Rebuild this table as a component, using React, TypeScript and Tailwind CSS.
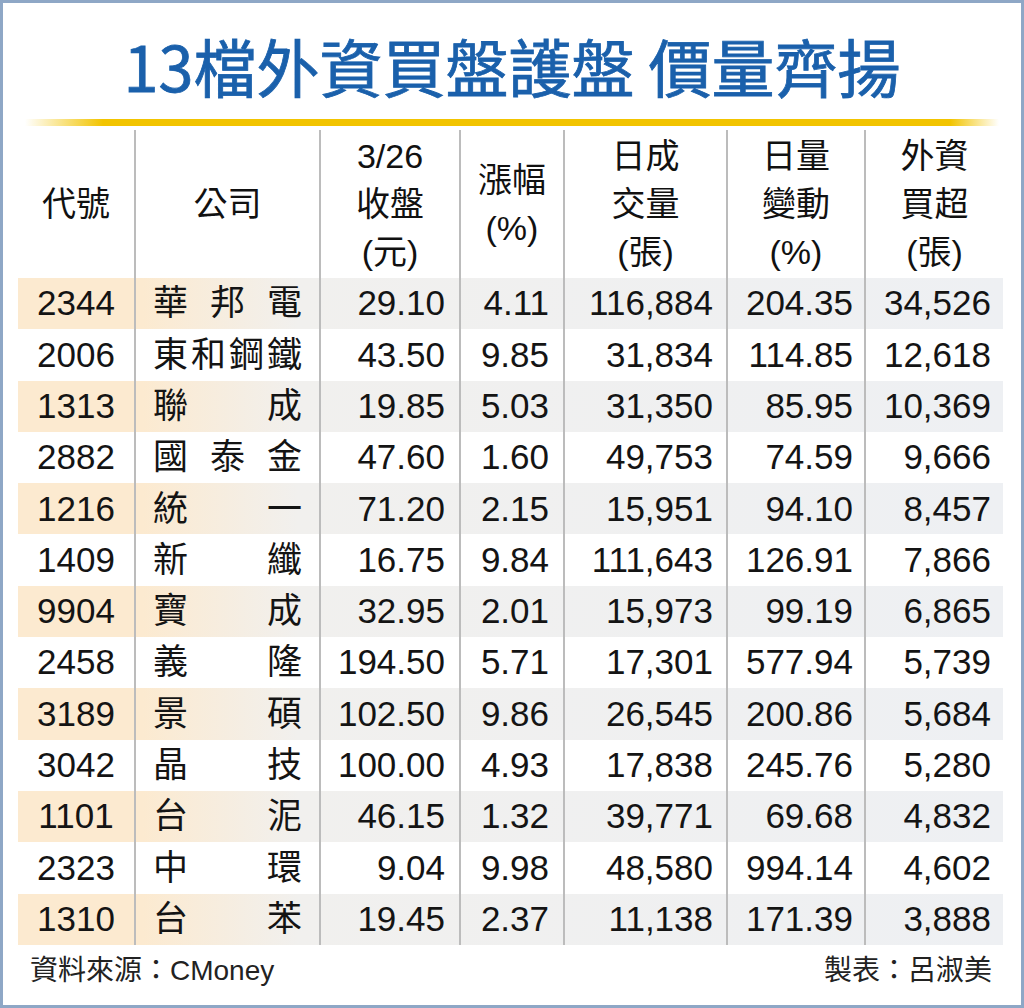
import React from "react";

type Row = [string, string, string, string, string, string, string];

const rows: Row[] = [
  ["2344", "華邦電", "29.10", "4.11", "116,884", "204.35", "34,526"],
  ["2006", "東和鋼鐵", "43.50", "9.85", "31,834", "114.85", "12,618"],
  ["1313", "聯成", "19.85", "5.03", "31,350", "85.95", "10,369"],
  ["2882", "國泰金", "47.60", "1.60", "49,753", "74.59", "9,666"],
  ["1216", "統一", "71.20", "2.15", "15,951", "94.10", "8,457"],
  ["1409", "新纖", "16.75", "9.84", "111,643", "126.91", "7,866"],
  ["9904", "寶成", "32.95", "2.01", "15,973", "99.19", "6,865"],
  ["2458", "義隆", "194.50", "5.71", "17,301", "577.94", "5,739"],
  ["3189", "景碩", "102.50", "9.86", "26,545", "200.86", "5,684"],
  ["3042", "晶技", "100.00", "4.93", "17,838", "245.76", "5,280"],
  ["1101", "台泥", "46.15", "1.32", "39,771", "69.68", "4,832"],
  ["2323", "中環", "9.04", "9.98", "48,580", "994.14", "4,602"],
  ["1310", "台苯", "19.45", "2.37", "11,138", "171.39", "3,888"],
];

const font = "font-['Liberation_Sans','Noto_Sans_CJK_TC','Noto_Sans_CJK_SC',sans-serif]";
const sep = "border-l-2 border-[#bcbcbc]";

function Header({ lines, w, first }: { lines: string[]; w: string; first?: boolean }) {
  return (
    <div className={`${w} ${first ? "" : sep} flex flex-col items-center justify-center text-[34px] leading-[48px] text-[#111]`}>
      {lines.map((l, i) => (
        <div key={i}>{l}</div>
      ))}
    </div>
  );
}

export default function App() {
  return (
    <div className={`w-[1024px] h-[1008px] border-[3px] border-[#8ea7c6] bg-white flex flex-col ${font}`}>
      <div className="h-[116px] pt-[8px] flex items-center justify-center text-[63px] font-normal text-[#1a60ab] font-['Noto_Sans_CJK_TC',sans-serif] [-webkit-text-stroke:0.8px_#1a60ab]">
        13檔外資買盤護盤 價量齊揚
      </div>
      <div className="mx-[22px] h-[7px] bg-[linear-gradient(to_right,rgba(243,198,0,0)_0%,#f2c400_8%,#f2c400_95%,rgba(243,198,0,0)_100%)]" />
      <div className="h-[4px]" />
      <div className="ml-[15px] w-[985px] flex flex-col">
        <div className="h-[148px] flex">
          <Header w="w-[116px]" lines={["代號"]} first />
          <Header w="w-[185px]" lines={["公司"]} />
          <Header w="w-[140px]" lines={["3/26", "收盤", "(元)"]} />
          <Header w="w-[104px]" lines={["漲幅", "(%)"]} />
          <Header w="w-[163px]" lines={["日成", "交量", "(張)"]} />
          <Header w="w-[138px]" lines={["日量", "變動", "(%)"]} />
          <Header w="w-[139px]" lines={["外資", "買超", "(張)"]} />
        </div>
        {rows.map((r, i) => {
          const shaded = i % 2 === 0;
          const chars = Array.from(r[1]);
          return (
            <div
              key={r[0]}
              className={`h-[51.3px] flex text-[35px] text-[#141414] ${
                shaded
                  ? "bg-[linear-gradient(to_right,#fcead0_0px,#fcead0_125px,#f1f0ee_280px,#eef0f3_100%)]"
                  : "bg-white"
              }`}
            >
              <div className="w-[116px] flex items-center justify-center">{r[0]}</div>
              <div className={`w-[185px] ${sep} flex items-center justify-between pl-[17px] pr-[17px]`}>
                {chars.map((c, j) => (
                  <span key={j}>{c}</span>
                ))}
              </div>
              <div className={`w-[140px] ${sep} flex items-center justify-end pr-[14px]`}>{r[2]}</div>
              <div className={`w-[104px] ${sep} flex items-center justify-end pr-[14px]`}>{r[3]}</div>
              <div className={`w-[163px] ${sep} flex items-center justify-end pr-[13px]`}>{r[4]}</div>
              <div className={`w-[138px] ${sep} flex items-center justify-end pr-[11px]`}>{r[5]}</div>
              <div className={`w-[139px] ${sep} flex items-center justify-end pr-[12px]`}>{r[6]}</div>
            </div>
          );
        })}
      </div>
      <div className="flex-1 flex justify-between items-start pt-[5px] pl-[27px] pr-[29px] text-[28px] text-[#222]">
        <div>資料來源：CMoney</div>
        <div>製表：呂淑美</div>
      </div>
    </div>
  );
}
